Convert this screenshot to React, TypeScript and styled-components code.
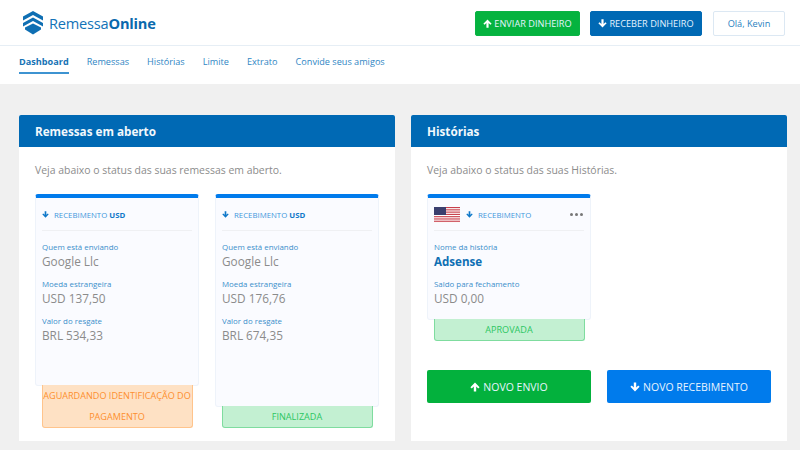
import React from 'react';
import styled, { createGlobalStyle } from 'styled-components';

const GlobalStyle = createGlobalStyle`
html, body {
    margin: 0;
    padding: 0;
    background: #f0f0f0;
    font-family: "Open Sans", "Liberation Sans", sans-serif;
}
* { box-sizing: border-box; }
`;

const Page = styled.div`
width: 800px;
height: 450px;
overflow: hidden;
display: flex;
flex-direction: column;
`;

const TopBar = styled.header`
height: 46px;
background: #fff;
border-bottom: 1px solid #e6eef5;
display: flex;
align-items: center;
justify-content: space-between;
padding: 1px 15px 0 22px;
`;

const Logo = styled.div`
display: flex;
align-items: center;
gap: 5px;
color: #1273b8;
font-size: 14.6px;
letter-spacing: -0.2px;
b { font-weight: 700; color: #0a69ad; }
`;

const TopActions = styled.div`
display: flex;
align-items: center;
gap: 10px;
`;

const TopButton = styled.button<{ $kind: 'green' | 'blue' | 'light' }>`
height: 25px;
padding: 0;
width: ${p => (p.$kind === 'green' ? '105px' : p.$kind === 'blue' ? '112px' : '72px')};
margin-left: ${p => (p.$kind === 'light' ? '1px' : '0')};
border-radius: 2px;
border: 1px solid ${p => (p.$kind === 'green' ? '#0ab344' : p.$kind === 'blue' ? '#0069b4' : '#dce8f3')};
background: ${p => (p.$kind === 'green' ? '#05b33f' : p.$kind === 'blue' ? '#0069b4' : '#fff')};
color: ${p => (p.$kind === 'light' ? '#2a7fc0' : '#e4f3ff')};
font-family: inherit;
font-size: 9.2px;
display: flex;
align-items: center;
justify-content: center;
gap: 2px;
`;

const Nav = styled.nav`
height: 38px;
background: #fff;
display: flex;
gap: 18px;
padding-left: 19px;
`;

const NavItem = styled.a<{ $active?: boolean }>`
height: 28px;
display: flex;
align-items: center;
padding-top: 4px;
font-size: 9.15px;
color: ${p => (p.$active ? '#1673b5' : '#2f86c4')};
font-weight: ${p => (p.$active ? 700 : 400)};
border-bottom: ${p => (p.$active ? '2px solid #3d93d1' : '2px solid transparent')};
`;

const Columns = styled.main`
flex: 1;
display: flex;
gap: 16px;
padding: 31px 13px 9px 19px;
`;

const Panel = styled.section`
width: 376px;
background: #fff;
display: flex;
flex-direction: column;
`;

const PanelHead = styled.h2`
margin: 0;
height: 32px;
background: #0069b4;
border-radius: 2px 2px 0 0;
color: #f2f8fc;
font-size: 11.7px;
font-weight: 700;
display: flex;
align-items: center;
padding-left: 16px;
`;

const PanelBody = styled.div`
padding: 16px 16px 0;
flex: 1;
display: flex;
flex-direction: column;
`;

const Intro = styled.p`
margin: 0 0 16px;
height: 15px;
line-height: 15px;
font-size: 10.45px;
color: #8c8c8c;
`;

const Cards = styled.div`
display: flex;
gap: 16px;
height: 234px;
`;

const CardColumn = styled.div`
width: 164px;
display: flex;
flex-direction: column;
align-items: center;
`;

const Card = styled.article`
width: 164px;
flex: 1;
background: #fafbff;
border: 1px solid #eef3fa;
border-top: 4px solid #007bec;
border-radius: 3px;
padding: 0 6px;
`;

const CardTop = styled.div`
height: 33px;
border-bottom: 1px solid #eff0f3;
display: flex;
align-items: center;
gap: 3px;
font-size: 7.8px;
color: #3f97dc;
padding-top: 1px;
b { color: #0f78c9; font-weight: 700; }
`;

const Flag = styled.svg`
width: 26px;
height: 16px;
margin-right: 3px;
`;

const Dots = styled.span`
margin-left: auto;
display: flex;
gap: 2px;
margin-right: 1px;
i {
    width: 3px;
    height: 3px;
    border-radius: 50%;
    background: #777;
}
`;

const FieldLabel = styled.div`
font-size: 7.9px;
line-height: 12px;
color: #3b8fcb;
margin-top: 8px;
&:nth-child(2) { margin-top: 10px; }
`;

const FieldValue = styled.div<{ $strong?: boolean }>`
font-size: ${p => (p.$strong ? '11.6px' : '11.8px')};
line-height: 17px;
font-weight: ${p => (p.$strong ? 700 : 400)};
color: ${p => (p.$strong ? '#0f6fb3' : '#8b8b8b')};
`;

const Status = styled.div<{ $tone: 'orange' | 'green' }>`
width: 151px;
margin-top: -1px;
text-align: center;
font-size: 9.1px;
line-height: 21px;
border-radius: 0 0 3px 3px;
border: 1px solid ${p => (p.$tone === 'orange' ? '#ffc48c' : '#7fdc9f')};
border-top: none;
background: ${p => (p.$tone === 'orange' ? '#fee1c4' : '#c3f0d2')};
color: ${p => (p.$tone === 'orange' ? '#fd8f2e' : '#2cc662')};
`;

const HistoryColumn = styled(CardColumn)`
height: 147px;
`;

const BigActions = styled.div`
display: flex;
gap: 16px;
margin-top: 29px;
`;

const BigButton = styled.button<{ $tone: 'green' | 'blue' }>`
width: 164px;
height: 33px;
border: none;
border-radius: 2px;
background: ${p => (p.$tone === 'green' ? '#03b13d' : '#007bec')};
color: #e8f4ff;
font-family: inherit;
font-size: 10.5px;
display: flex;
align-items: center;
justify-content: center;
gap: 3px;
`;

const Arrow = ({ down, size = 9, color = 'currentColor' }: { down?: boolean; size?: number; color?: string }) => (
    <svg width={size} height={size} viewBox="0 0 10 10" style={down ? { transform: 'rotate(180deg)' } : undefined}>
        <path d="M5 .5 9.6 5.2 8.2 6.5 6.2 4.5V9.6H3.8V4.5L1.8 6.5.4 5.2Z" fill={color} />
    </svg>
);

const LogoMark = () => (
    <svg width="22" height="24" viewBox="0 0 22 24">
        <path d="M11 0 21 5.5V9.5L11 4 1 9.5V5.5Z" fill="#0f6fb3" />
        <path d="M11 6.5 21 12V15.5L11 10 1 15.5V12Z" fill="#0f6fb3" />
        <path d="M3 16.5 11 12.5 19 16.5V18.5L11 23.5 3 18.5Z" fill="#0f6fb3" />
    </svg>
);

const UsFlag = () => (
    <Flag viewBox="0 0 26 16">
        <rect width="26" height="16" fill="#fff" />
        {[0, 2, 4, 6, 8, 10, 12, 14].map(i => (
            <rect key={i} y={i * 1.14} width="26" height="1.14" fill="#c8404c" />
        ))}
        <rect width="12" height="8" fill="#3a3f6e" />
    </Flag>
);

const remessas = [
    { id: 1, foreign: 'USD 137,50', brl: 'BRL 534,33', status: 'AGUARDANDO IDENTIFICAÇÃO DO PAGAMENTO', tone: 'orange' as const },
    { id: 2, foreign: 'USD 176,76', brl: 'BRL 674,35', status: 'FINALIZADA', tone: 'green' as const },
];

const menu = ['Remessas', 'Histórias', 'Limite', 'Extrato', 'Convide seus amigos'];

const App = () => {
    return (
        <Page>
            <GlobalStyle />
            <TopBar>
                <Logo>
                    <LogoMark />
                    <span>Remessa<b>Online</b></span>
                </Logo>
                <TopActions>
                    <TopButton $kind="green"><Arrow size={9} color="#fff" /> ENVIAR DINHEIRO</TopButton>
                    <TopButton $kind="blue"><Arrow down size={9} color="#fff" /> RECEBER DINHEIRO</TopButton>
                    <TopButton $kind="light">Olá, Kevin</TopButton>
                </TopActions>
            </TopBar>
            <Nav>
                <NavItem $active>Dashboard</NavItem>
                {menu.map(item => <NavItem key={item}>{item}</NavItem>)}
            </Nav>
            <Columns>
                <Panel>
                    <PanelHead>Remessas em aberto</PanelHead>
                    <PanelBody>
                        <Intro>Veja abaixo o status das suas remessas em aberto.</Intro>
                        <Cards>
                            {remessas.map(r => (
                                <CardColumn key={r.id}>
                                    <Card>
                                        <CardTop>
                                            <Arrow down size={7} color="#0f78c9" />
                                            <span>&nbsp;RECEBIMENTO <b>USD</b></span>
                                        </CardTop>
                                        <FieldLabel>Quem está enviando</FieldLabel>
                                        <FieldValue>Google Llc</FieldValue>
                                        <FieldLabel>Moeda estrangeira</FieldLabel>
                                        <FieldValue>{r.foreign}</FieldValue>
                                        <FieldLabel>Valor do resgate</FieldLabel>
                                        <FieldValue>{r.brl}</FieldValue>
                                    </Card>
                                    <Status $tone={r.tone}>{r.status}</Status>
                                </CardColumn>
                            ))}
                        </Cards>
                    </PanelBody>
                </Panel>
                <Panel>
                    <PanelHead>Histórias</PanelHead>
                    <PanelBody>
                        <Intro>Veja abaixo o status das suas Histórias.</Intro>
                        <HistoryColumn>
                            <Card>
                                <CardTop>
                                    <UsFlag />
                                    <Arrow down size={7} color="#0f78c9" />
                                    <span>&nbsp;RECEBIMENTO</span>
                                    <Dots><i /><i /><i /></Dots>
                                </CardTop>
                                <FieldLabel>Nome da história</FieldLabel>
                                <FieldValue $strong>Adsense</FieldValue>
                                <FieldLabel>Saldo para fechamento</FieldLabel>
                                <FieldValue>USD 0,00</FieldValue>
                            </Card>
                            <Status $tone="green">APROVADA</Status>
                        </HistoryColumn>
                        <BigActions>
                            <BigButton $tone="green"><Arrow size={10} color="#fff" /> NOVO ENVIO</BigButton>
                            <BigButton $tone="blue"><Arrow down size={10} color="#fff" /> NOVO RECEBIMENTO</BigButton>
                        </BigActions>
                    </PanelBody>
                </Panel>
            </Columns>
        </Page>
    );
}

export default App;
